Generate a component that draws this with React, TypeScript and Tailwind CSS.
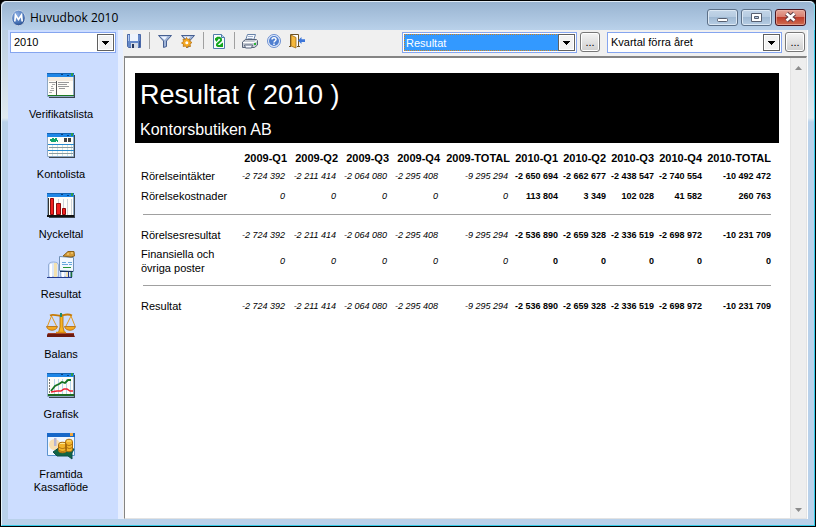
import type { ReactNode } from 'react';
import clsx from 'clsx';

const COLUMNS = [
  { label: '2009-Q1', width: 'w-[51px]' },
  { label: '2009-Q2', width: 'w-[51px]' },
  { label: '2009-Q3', width: 'w-[51px]' },
  { label: '2009-Q4', width: 'w-[51px]' },
  { label: '2009-TOTAL', width: 'w-[70px]' },
  { label: '2010-Q1', width: 'w-[48px]' },
  { label: '2010-Q2', width: 'w-[48px]' },
  { label: '2010-Q3', width: 'w-[48px]' },
  { label: '2010-Q4', width: 'w-[48px]' },
  { label: '2010-TOTAL', width: 'w-[69px]' },
];

const ZEROS = Array<string>(10).fill('0');

const RESULT = [
  '-2 724 392', '-2 211 414', '-2 064 080', '-2 295 408', '-9 295 294',
  '-2 536 890', '-2 659 328', '-2 336 519', '-2 698 972', '-10 231 709',
];

const ROWS: { label: string; values: string[]; ruleBelow?: boolean }[] = [
  {
    label: 'Rörelseintäkter',
    values: [
      '-2 724 392', '-2 211 414', '-2 064 080', '-2 295 408', '-9 295 294',
      '-2 650 694', '-2 662 677', '-2 438 547', '-2 740 554', '-10 492 472',
    ],
  },
  {
    label: 'Rörelsekostnader',
    values: ['0', '0', '0', '0', '0', '113 804', '3 349', '102 028', '41 582', '260 763'],
    ruleBelow: true,
  },
  { label: 'Rörelsesresultat', values: RESULT },
  { label: 'Finansiella och övriga poster', values: ZEROS, ruleBelow: true },
  { label: 'Resultat', values: RESULT },
];

const NAV: { label: string; icon: ReactNode }[] = [
  { label: 'Verifikatslista', icon: <VoucherIcon /> },
  { label: 'Kontolista', icon: <AccountsIcon /> },
  { label: 'Nyckeltal', icon: <KeyFiguresIcon /> },
  { label: 'Resultat', icon: <ResultIcon /> },
  { label: 'Balans', icon: <BalanceIcon /> },
  { label: 'Grafisk', icon: <ChartIcon /> },
  { label: 'Framtida Kassaflöde', icon: <CashFlowIcon /> },
];

export default function App() {
  return (
    <div className="min-h-screen bg-black font-['Liberation_Sans',Arial,sans-serif] text-black">
      <div className="flex min-h-screen flex-col rounded-t-md border border-black bg-[#b9d1ea]">
        <TitleBar />
        <div className="flex flex-1 border-l border-r border-b border-l-[#e6f5fb] border-r-[#35cbe8] border-b-[#35cbe8] bg-[linear-gradient(#bccfe2,#dfe9ef_88px,#b9d1ea_92px)] px-1.5 pb-1.5">
          <Sidebar />
          <main className="flex min-w-0 flex-1 flex-col border-r border-white bg-[#f0f0f0]">
            <Toolbar />
            <div className="ml-px flex flex-1 border border-t-2 border-[#e3e3e3] border-t-[#848484] border-l-[#848484] bg-white">
              <Report />
              <Scrollbar />
            </div>
          </main>
        </div>
      </div>
    </div>
  );
}

function TitleBar() {
  return (
    <header className="flex h-[29px] items-center rounded-t-md border-t border-r border-l border-t-[#e1ecf6] border-r-[#7fdcf0] border-l-[#e1ecf6] bg-linear-to-b from-[#99b4d1] to-[#b9d1ea] pt-[3px] pr-[8px] pl-[9px]">
      <svg width="15" height="18" viewBox="0 0 15 18" aria-hidden="true">
        <defs>
          <radialGradient id="logo" cx="0.4" cy="0.3" r="0.8">
            <stop offset="0" stopColor="#8eb0e4" />
            <stop offset="0.6" stopColor="#4a75b8" />
            <stop offset="1" stopColor="#1b3c78" />
          </radialGradient>
        </defs>
        <ellipse cx="7.5" cy="9" rx="6.8" ry="7.800" fill="url(#logo)" stroke="#c3d2e6" />
        <path d="M3.8 12.500 4.500 6l3 4.500 3-4.500.7 6.500" fill="none" stroke="#fff" strokeWidth="1.700" />
      </svg>
      <h1 className="ml-1 flex-1 font-['Open_Sans','Noto_Sans',sans-serif] text-xs">Huvudbok 2010</h1>
      <div className="flex gap-[3px]">
        <WindowButton label="Minimera">
          <rect x="10.5" y="9.5" width="10" height="3" rx="1" fill="#fff" stroke="#575f70" />
        </WindowButton>
        <WindowButton label="Maximera">
          <path d="M10.500 4.500h10v8h-10z" fill="#fff" stroke="#575f70" />
          <path d="M13.500 7.500h4v2h-4z" fill="#b4c8de" stroke="#575f70" />
        </WindowButton>
        <WindowButton label="Stäng" danger>
          <path d="m11.500 4.500 8 7m0-7-8 7" stroke="#5a3a44" strokeWidth="4.500" />
          <path d="m11.500 4.500 8 7m0-7-8 7" stroke="#fff" strokeWidth="2.500" />
        </WindowButton>
      </div>
    </header>
  );
}

function WindowButton({ label, danger, children }: { label: string; danger?: boolean; children: ReactNode }) {
  return (
    <button
      type="button"
      aria-label={label}
      className={clsx(
        'h-[17px] w-[31px] rounded-[3px] border inset-ring',
        danger
          ? 'border-[#4b1620] bg-[linear-gradient(#e5a598,#d98072_45%,#bd3c2b_50%,#cf6d50)] inset-ring-[#eebbb0]/60'
          : 'border-[#5c7088] bg-[linear-gradient(#c3d5e8,#b6cbe1_45%,#9fb9d3_50%,#b7cde4)] inset-ring-[#dce8f4]',
      )}
    >
      <svg viewBox="0 0 31 17" className="-m-px h-[17px] w-[31px]" aria-hidden="true">
        {children}
      </svg>
    </button>
  );
}

function Sidebar() {
  return (
    <aside className="w-[115px] shrink-0 border-r-5 border-[#e6eeff] bg-[#ccddff]">
      <div className="px-0.5 pt-0.5">
        <Combo label="Räkenskapsår" value="2010" />
      </div>
      <nav className="mt-[18px] flex flex-col items-center gap-2.5 pr-1">
        {NAV.map((item) => (
          <button
            key={item.label}
            type="button"
            className="flex w-20 flex-col items-center gap-2 text-[11px] leading-[13px]"
          >
            <svg width="30" height="29" viewBox="0 0 30 29" aria-hidden="true">
              {item.icon}
            </svg>
            {item.label}
          </button>
        ))}
      </nav>
    </aside>
  );
}

function Combo({ label, value, selected }: { label: string; value: string; selected?: boolean }) {
  return (
    <div className="relative h-[21px] w-full border border-[#85a5ef] bg-white p-px">
      <select
        aria-label={label}
        defaultValue={value}
        className={clsx(
          'block h-full w-full appearance-none pr-5 text-[11px] outline-none',
          selected ? 'border border-dotted border-[#d0801c] bg-[#3399ff] pl-px text-white' : 'pl-0.5',
        )}
      >
        <option>{value}</option>
      </select>
      <span className="pointer-events-none absolute top-px right-px flex h-[17px] w-[17px] items-center justify-center border border-[#606060] bg-[#f2f2f2] inset-ring inset-ring-white">
        <svg width="7" height="4" viewBox="0 0 7 4" shapeRendering="crispEdges">
          <path d="M0 0h7L3.500 4z" />
        </svg>
      </span>
    </div>
  );
}

function MoreButton({ label }: { label: string }) {
  return (
    <button
      type="button"
      aria-label={label}
      className="h-5 w-5 rounded-[3px] border border-[#777] bg-linear-to-b from-[#f4f4f4] to-[#cfcfcf] text-[11px] leading-4 inset-ring inset-ring-white"
    >
      ...
    </button>
  );
}

function Toolbar() {
  return (
    <div className="flex h-[26px] items-start pt-0.5 pr-0.5 pl-[3px]">
      <div className="flex flex-1 items-center">
        <ToolButton label="Spara">
          <path d="M1.500 1.500h13v13h-12l-1-1z" fill="#6488c8" stroke="#4a68a8" />
          <path d="M4 1h8v7H4z" fill="#eef4fd" />
          <path d="M5 10h7v5H5z" fill="#d5dce6" />
          <path d="M6 11h2v4H6z" fill="#24365c" />
          <path d="M2 2h1v6H2z" fill="#b4cbf2" />
          <path d="M13 8h1v6h-1z" fill="#3a568f" />
        </ToolButton>
        <Separator />
        <ToolButton label="Filter">
          <FunnelShape />
        </ToolButton>
        <span className="w-[7px]" />
        <ToolButton label="Avancerat filter">
          <FunnelShape />
          <path
            d="m6.500 4.500 1.200 2 2.300-.5-.2 2.300 2.200 1.200-2 1.500.5 2.500-2.300-.5L7 15l-1.500-2-2.300.5.3-2.300-2-1.200 2-1.500L3 6l2.300.5z"
            fill="#f6a821"
            stroke="#b87412"
            strokeWidth="0.8"
          />
          <circle cx="6.800" cy="9.800" r="1.500" fill="#fff" />
        </ToolButton>
        <Separator />
        <ToolButton label="Uppdatera">
          <path d="M2.500 1.500h8l3 3v11h-11z" fill="#f8fbff" stroke="#527dab" />
          <path d="M10.500 1.500v3h3" fill="#b9d5ee" stroke="#527dab" />
          <path d="M5 7.500V6l1.500-1.200h2L10 6v1.500L6 11.200v1.300l1 .5h4v-2" fill="none" stroke="#12a51c" strokeWidth="1.900" />
          <path d="M4 5.500h4L5.500 9zM12 13.500V9.500l-3 2z" fill="#12a51c" />
        </ToolButton>
        <Separator />
        <ToolButton label="Skriv ut">
          <path d="m5.500 1.500 8 0-2 6h-8z" fill="#f7faff" stroke="#6782a8" />
          <path d="M6 3.500h5M5.500 5.500h5" stroke="#9eb0ca" />
          <path d="m.5 9 3-2.500h11L15.500 8v4l-3 2.500H.5z" fill="#c5cad3" stroke="#59657a" />
          <path d="M1 9.500h11l3-2" fill="none" stroke="#fff" />
          <path d="M2.500 12h8l-1 3h-6z" fill="#f5f8ff" stroke="#59657a" />
          <path d="M12 10h2v2h-2z" fill="#2bb534" />
        </ToolButton>
        <span className="w-2" />
        <ToolButton label="Hjälp">
          <circle cx="8" cy="8" r="6.500" fill="#e4edfc" stroke="#6c8fd1" />
          <circle cx="8" cy="8" r="5" fill="#4f7fd0" />
          <path d="M6 6.500C6 4 10.200 4 10 6.500 9.900 8 8 8 8 9.500M8 10.500V12" fill="none" stroke="#fff" strokeWidth="1.500" />
        </ToolButton>
        <span className="w-[7px]" />
        <ToolButton label="Avsluta">
          <path d="M1.500 13.500v-12h8v12" fill="#fff" stroke="#6b5227" />
          <path d="m2 2 5 2.500V15l-5-2z" fill="#f5b83c" stroke="#9b6a17" strokeWidth="0.8" />
          <path d="M0 13.500h2M8 13.500h3" stroke="#6b5227" />
          <path d="M9 7.500 12.500 4v2.300H16v2.600h-3.500V11z" fill="#3d76d9" />
        </ToolButton>
      </div>
      <div className="w-[175px] shrink-0">
        <Combo label="Rapport" value="Resultat" selected />
      </div>
      <div className="mr-[7px] ml-[3px] flex">
        <MoreButton label="Välj rapport" />
      </div>
      <div className="w-[175px] shrink-0">
        <Combo label="Period" value="Kvartal förra året" />
      </div>
      <div className="ml-[3px] flex">
        <MoreButton label="Välj period" />
      </div>
    </div>
  );
}

function ToolButton({ label, children }: { label: string; children: ReactNode }) {
  return (
    <button type="button" aria-label={label} title={label} className="h-4 w-4">
      <svg width="16" height="16" viewBox="0 0 16 16" aria-hidden="true">
        {children}
      </svg>
    </button>
  );
}

function Separator() {
  return <span className="mx-[7px] h-[17px] w-px bg-[#a0a0a0]" />;
}

function FunnelShape() {
  return (
    <>
      <path d="M1.500 2.500h13L9.500 8v5.500l-3 1V8z" fill="#9fb4d8" stroke="#465f91" />
      <path d="M3.500 3.500h7L7.500 7z" fill="#eef4ff" />
    </>
  );
}

function Report() {
  return (
    <section className="min-w-0 flex-1 pt-[15px] pr-[11px] pl-2.5">
      <div className="h-[70px] bg-black pl-[5px] text-white">
        <h2 className="pt-0.5 text-[27px] leading-10">Resultat ( 2010 )</h2>
        <p className="pt-[3px] text-base leading-6">Kontorsbutiken AB</p>
      </div>
      <table className="mt-1.5 ml-1.5 w-[calc(100%-14px)] table-fixed border-collapse text-[11px] leading-[14px]">
        <colgroup>
          <col />
          {COLUMNS.map((col) => (
            <col key={col.label} className={col.width} />
          ))}
        </colgroup>
        <thead>
          <tr className="h-[17px] whitespace-nowrap">
            <td />
            {COLUMNS.map((col) => (
              <th key={col.label} scope="col" className="p-0 font-bold">
                <span className="flex justify-end">{col.label}</span>
              </th>
            ))}
          </tr>
        </thead>
        {ROWS.map((row) => (
          <tbody key={row.label}>
            <tr className="h-5">
              <th scope="row" className="p-0 py-0.5 text-left font-normal">
                {row.label}
              </th>
              {row.values.map((value, i) => (
                <td
                  key={COLUMNS[i].label}
                  className={clsx('p-0 text-[9px] whitespace-nowrap', i < 5 ? 'pr-0.5 italic' : 'font-bold')}
                >
                  <span className="flex justify-end">{value}</span>
                </td>
              ))}
            </tr>
            {row.ruleBelow && (
              <tr>
                <td colSpan={11} className="p-0 pt-2 pb-2.5">
                  <hr className="ml-0.5 border-t border-[#a0a0a0]" />
                </td>
              </tr>
            )}
          </tbody>
        ))}
      </table>
    </section>
  );
}

function Scrollbar() {
  return (
    <div aria-hidden="true" className="flex w-4 shrink-0 flex-col items-center justify-between border-l border-[#e3e3e3] bg-[#eeeeee] py-1.5">
      <svg width="7" height="4" viewBox="0 0 7 4" className="mt-0.5">
        <path d="M0 4h7L3.500 0z" fill="#8c8c8c" />
      </svg>
      <svg width="7" height="4" viewBox="0 0 7 4">
        <path d="M0 0h7L3.500 4z" fill="#8c8c8c" />
      </svg>
    </div>
  );
}

// Small application window shared by most of the sidebar icons
function MiniWindow({ children }: { children: ReactNode }) {
  return (
    <>
      <path d="M3 4h26v23H3z" fill="#3c4650" />
      <path d="M1.500 2.500h26v23h-26z" fill="#fffdf8" stroke="#8fa9c4" />
      <path d="M1 2h27v4H1z" fill="#1f86e6" />
      <path d="M1 2h27v1H1z" fill="#1664b4" />
      <path d="M15 3.500h2M21 4.500h2" stroke="#0b3f7d" />
      <path d="M25 2h2v3h-2z" fill="#2f9b4c" />
      {children}
    </>
  );
}

function VoucherIcon() {
  return (
    <MiniWindow>
      <path d="M2 6h25v4H2z" fill="#f4ebdf" />
      <path d="M3 11.500h7M12 11.500h11M12 13.500h9M12 15.500h11M13 17.500h6" stroke="#999" />
      <path d="M6 13.500h3M5 15.500h2M5 17.500h3M4 19.500h4M3 21.500h3" stroke="#aaa" />
      <path d="M10.500 10v14" stroke="#555" />
      <path d="M2 24.500h26" stroke="#1e7b22" />
    </MiniWindow>
  );
}

function AccountsIcon() {
  return (
    <MiniWindow>
      <path d="M4 8h2V7h2v1h1V7h2v2h1v2h-1v-1h-1v1H5v-1H4z" fill="#12a56b" />
      <path d="M18 7h3v4h-3zM22 7h3v4h-3z" fill="#444" />
      <path d="M6.500 13v12M11.500 13v12M16.500 13v12M21.500 13v12M25.500 13v12" stroke="#c8e6ee" />
      <path d="M2 13.500h26M2 19.500h26" stroke="#2789cf" />
      <path d="M3 16.500h24M3 22.500h24" stroke="#8b9ba0" />
    </MiniWindow>
  );
}

function KeyFiguresIcon() {
  return (
    <MiniWindow>
      <path d="M12.500 8v17M17.500 8v17M21.500 8v17M25.500 8v17" stroke="#ccd2d8" />
      <path d="M2.500 7v17" stroke="#333" />
      <path d="M4.500 7.500h3v16h-3zM10.500 12.500h4v11h-4zM16.500 17.500h3v6h-3z" fill="#f02020" stroke="#8d0b0b" />
      <path d="M1 24h27v2H1z" fill="#111" />
    </MiniWindow>
  );
}

function ResultIcon() {
  return (
    <>
      <path d="M2.500 26V14c0-4 10-4 10 0v12zM14.500 26V14c0-4 10-4 10 0v12z" fill="#dbe7fa" stroke="#94aed8" />
      <path d="M4 13h2v13H4zM16 13h2v13h-2z" fill="#fff" />
      <path d="M8 12h3v14H8zM20 12h2v14h-2z" fill="#f3e1ae" />
      <path d="M1 26.500h25M22.500 20v6" stroke="#223a8c" />
      <path d="M25.500 20v6" stroke="#1d6f38" strokeWidth="1.500" />
      <path d="m13.500 5.500 14 1v14l-14-1z" fill="#f2f8ff" stroke="#6f8fb4" />
      <path d="m17 5 5-4.500h6L28.500 5 25 6z" fill="#d59b38" stroke="#8a621d" />
      <path d="M21 3h2M25 2h2" stroke="#f8de92" />
      <path d="M16 11.500h4M22 11.500h4M16 13.500h6M23 13.500h3" stroke="#67a8de" />
      <path d="M17 16.500h8" stroke="#279536" />
      <path d="M14 20.500h13" stroke="#17305e" />
    </>
  );
}

function BalanceIcon() {
  return (
    <>
      <path d="M2 22h26v2l1 2H1v-2z" fill="#6d1a10" />
      <path d="M2 22.500h26" stroke="#a33d28" />
      <path d="M14 4h3v12l1.500 5.500h-6L14 16z" fill="#f7b321" stroke="#a8690b" strokeWidth="0.8" />
      <path d="M4 4.500c4-2 6 1 11 0s7-2 11 0" fill="none" stroke="#c67b08" strokeWidth="1.800" />
      <path d="M5.500 5 1.500 15M5.500 5l5 10M25 5l-5 10M25 5l4 10" fill="none" stroke="#e29a21" />
      <path d="M.5 15.500h11c-1 5-10 5-11 0zM18.500 15.500h11c-1 5-10 5-11 0z" fill="#f4a920" stroke="#ab6810" strokeWidth="0.8" />
      <path d="M14 2h2v4h-2z" fill="#258b6a" />
      <path d="M10 21.500h10" stroke="#d98c11" strokeWidth="1.500" />
    </>
  );
}

function ChartIcon() {
  return (
    <MiniWindow>
      <path d="M8.500 8v15M12.500 8v15M16.500 8v15M20.500 8v15M24.500 8v15" stroke="#b9d7eb" />
      <path d="M3.500 8v16" stroke="#777" strokeDasharray="2 1" />
      <path d="m5 20 4-5 4-2 3-2 3 1 3-3h3" fill="none" stroke="#177421" strokeWidth="1.800" />
      <path d="m5 21 6-1h4l3-2h3l3 2h3" fill="none" stroke="#ee2232" strokeWidth="1.500" />
      <path d="M2 24h26" stroke="#1e6b22" strokeWidth="2" />
    </MiniWindow>
  );
}

function CashFlowIcon() {
  return (
    <>
      <path d="M1.500 2.500h27v22h-27z" fill="#f0f6ff" stroke="#5c94cf" />
      <path d="M1 2h28v4H1z" fill="#1767c8" />
      <path d="M24 2h3v3h-3z" fill="#f0a83e" />
      <circle cx="8.500" cy="13.500" r="5.500" fill="#f8dfb0" />
      <path d="M8 7h2.500v8H8z" fill="#b9b6d2" />
      <path d="m7 21 7-5 14 2-2 4 0 6-4-3H11z" fill="#126544" stroke="#0d4e4c" />
      <path d="M19.500 10.500c0-3 7-3 7 0v8c0 3-7 3-7 0zM12.500 13.500c0-3 8-3 8 0v6c0 3-8 3-8 0z" fill="#f2b42b" stroke="#a96c0c" />
      <path d="M13 16c2 2 5 2 7 0M13 19c2 2 5 2 7 0M20 13c2 2 4 2 6 0M20.500 16c2 2 4 2 6 0" fill="none" stroke="#a96c0c" />
      <path d="M14 12.500h5M21 10h4" stroke="#ffe791" />
    </>
  );
}
